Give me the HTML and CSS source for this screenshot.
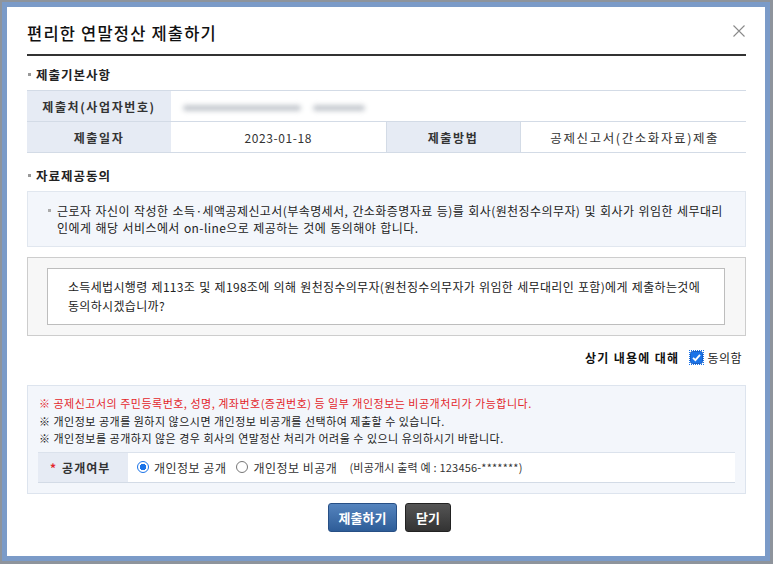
FILE: index.html
```html
<!DOCTYPE html>
<html>
<head>
  <meta charset="utf-8">
  <title>편리한 연말정산 제출하기</title>
  <link rel="stylesheet" href="styles.css">
</head>
<body>
  <div class="dialog">
    <div class="dialog-head">
      <h1>편리한 연말정산 제출하기</h1>
      <span class="close-btn">
        <svg viewBox="0 0 12 12" width="12" height="12">
          <path d="M0.5 0.5L11.5 11.5M11.5 0.5L0.5 11.5" stroke="#8a8a8a" stroke-width="1.1" fill="none"/>
        </svg>
      </span>
    </div>

    <h2 class="sec-title">제출기본사항</h2>
    <table class="info-table">
      <colgroup>
        <col class="c-label">
        <col class="c-date">
        <col class="c-label2">
        <col>
      </colgroup>
      <tr>
        <th>제출처(사업자번호)</th>
        <td colspan="3" class="blur-cell"><span class="blurred b1"></span><span class="blurred b2"></span></td>
      </tr>
      <tr>
        <th>제출일자</th>
        <td class="date-cell">2023-01-18</td>
        <th class="th-mid">제출방법</th>
        <td class="method-cell">공제신고서(간소화자료)제출</td>
      </tr>
    </table>

    <h2 class="sec-title sec-second">자료제공동의</h2>
    <div class="note-box">
      <p class="dot-item">근로자 자신이 작성한 소득·세액공제신고서(부속명세서, 간소화증명자료 등)를 회사(원천징수의무자) 및 회사가 위임한 세무대리인에게 해당 서비스에서 on-line으로 제공하는 것에 동의해야 합니다.</p>
    </div>

    <div class="agree-box">
      <div class="agree-inner">
        소득세법시행령 제113조 및 제198조에 의해 원천징수의무자(원천징수의무자가 위임한 세무대리인 포함)에게 제출하는것에 동의하시겠습니까?
      </div>
    </div>

    <div class="agree-check">
      <strong>상기 내용에 대해</strong>
      <span class="chk">
        <svg viewBox="0 0 13 13" width="13" height="13">
          <rect x="0.5" y="0.5" width="12" height="12" rx="2" fill="#1a73e8" stroke="#1a5fc4"/>
          <path d="M3 6.8L5.4 9.2L10 3.8" stroke="#fff" stroke-width="1.8" fill="none"/>
        </svg>
      </span>
      <span class="chk-text">동의함</span>
    </div>

    <div class="privacy-box">
      <p class="warn red">※ 공제신고서의 주민등록번호, 성명, 계좌번호(증권번호) 등 일부 개인정보는 비공개처리가 가능합니다.</p>
      <p class="warn">※ 개인정보 공개를 원하지 않으시면 개인정보 비공개를 선택하여 제출할 수 있습니다.</p>
      <p class="warn">※ 개인정보를 공개하지 않은 경우 회사의 연말정산 처리가 어려울 수 있으니 유의하시기 바랍니다.</p>
      <div class="open-row">
        <div class="open-label"><span class="req">*</span> 공개여부</div>
        <div class="open-value">
          <label class="radio"><span class="rad on"></span>개인정보 공개</label>
          <label class="radio"><span class="rad"></span>개인정보 비공개</label>
          <span class="example">(비공개시 출력 예 : 123456-*******)</span>
        </div>
      </div>
    </div>

    <div class="btns">
      <button class="btn btn-blue">제출하기</button>
      <button class="btn btn-dark">닫기</button>
    </div>
  </div>
</body>
</html>
```

FILE: styles.css
```css
body {
  margin: 0;
  padding: 0;
  background-color: #8e949c;
  font-family: "Noto Sans CJK KR", "Noto Sans", sans-serif;
  color: #222;
  font-size: 12px;
}

.dialog {
  margin: 2px 0 0 2px;
  width: 719px;
  height: 549px;
  border: 5px solid #7b9bc8;
  background-color: #fff;
  padding: 0 19px 0 20px;
}

.dialog-head {
  display: flex;
  justify-content: space-between;
  align-items: center;
  height: 47px;
  border-bottom: 2px solid #333;
}

.dialog-head h1 {
  margin: 4px 0 0 0;
  font-size: 16.5px;
  font-weight: 500;
  color: #111;
  letter-spacing: 1.2px;
}

.close-btn {
  display: flex;
  margin: 0 1px 0 0;
}

.sec-title {
  margin: 0;
  font-size: 12.5px;
  font-weight: bold;
  color: #222;
  display: flex;
  align-items: center;
  height: 34px;
  padding-top: 3px;
  box-sizing: border-box;
  letter-spacing: 1px;
}

.sec-title.sec-second {
  margin-top: 4px;
}

.sec-title::before {
  content: "";
  width: 3px;
  height: 3px;
  background-color: #999;
  margin: 0 5px 0 1px;
}

.info-table {
  width: 100%;
  border-collapse: collapse;
  border-top: 1px solid #d3dbe6;
  border-bottom: 1px solid #d3dbe6;
  table-layout: fixed;
}

.info-table col.c-label {
  width: 144px;
}

.info-table col.c-date {
  width: 215px;
}

.info-table col.c-label2 {
  width: 134px;
}

.info-table th,
.info-table td {
  height: 30px;
  padding: 0;
  border-bottom: 1px solid #d3dbe6;
  text-align: center;
  font-size: 12px;
  letter-spacing: 0.6px;
  color: #333;
}

.info-table th {
  background-color: #e6ebf4;
  font-weight: bold;
  letter-spacing: 1.6px;
}

.info-table th.th-mid {
  border-left: 1px solid #d3dbe6;
  border-right: 1px solid #d3dbe6;
}

.info-table td.method-cell {
  font-size: 12.5px;
  letter-spacing: 1.6px;
  padding-left: 3px;
}

.info-table td.blur-cell {
  text-align: left;
}

.blurred {
  display: inline-block;
  height: 6px;
  background-color: #c4c8ce;
  filter: blur(2.5px);
  border-radius: 3px;
  vertical-align: middle;
}

.blurred.b1 {
  width: 118px;
  margin-left: 12px;
}

.blurred.b2 {
  width: 52px;
  margin-left: 12px;
}

.note-box {
  background-color: #f3f6fb;
  border: 1px solid #e1e7ef;
  padding: 10px 14px 10px 20px;
}

.dot-item {
  margin: 0;
  position: relative;
  padding-left: 9px;
  line-height: 17px;
  font-size: 12px;
  color: #222;
  letter-spacing: 0.42px;
  word-spacing: 1px;
}

.dot-item::before {
  content: "";
  position: absolute;
  left: 0;
  top: 7px;
  width: 3px;
  height: 3px;
  background-color: #aaa;
}

.agree-box {
  margin-top: 10px;
  background-color: #f7f7f7;
  border: 1px solid #cdcdcd;
  padding: 10px 20px 10px 19px;
}

.agree-inner {
  background-color: #fff;
  border: 1px solid #bdbdbd;
  padding: 8px 20px 9px 20px;
  line-height: 19px;
  font-size: 12px;
  color: #222;
  letter-spacing: 0.32px;
  word-spacing: 1px;
}

.agree-check {
  display: flex;
  justify-content: flex-end;
  align-items: center;
  height: 42px;
  padding-right: 4px;
  font-size: 12px;
}

.agree-check strong {
  margin-right: 11px;
  color: #111;
  letter-spacing: 1.3px;
}

.chk {
  display: flex;
  margin-right: 4px;
  outline: 1px dotted #1a73e8;
}

.chk-text {
  letter-spacing: 0.5px;
}

.privacy-box {
  margin-top: 7px;
  background-color: #f3f6fb;
  border: 1px solid #dde4ee;
  padding: 9px 10px 10px 10px;
}

.warn {
  margin: 0 0 0 1px;
  font-size: 11px;
  line-height: 17.5px;
  color: #222;
  letter-spacing: 0.5px;
}

.warn.red {
  color: #e3262c;
}

.open-row {
  display: flex;
  margin-top: 4px;
  border-top: 1px solid #dbe2ec;
  border-bottom: 1px solid #d3dbe6;
  height: 29px;
}

.open-label {
  width: 90px;
  background-color: #e6ebf4;
  display: flex;
  align-items: center;
  padding-left: 12px;
  box-sizing: border-box;
  font-weight: bold;
  font-size: 12px;
  color: #333;
  letter-spacing: 1px;
}

.req {
  color: #e3262c;
  margin-right: 5px;
}

.open-value {
  flex: 1;
  background-color: #fff;
  display: flex;
  align-items: center;
  padding-left: 9px;
  font-size: 12px;
  color: #333;
  letter-spacing: 0.5px;
}

.radio {
  display: flex;
  align-items: center;
  margin-right: 10px;
}

.rad {
  width: 12px;
  height: 12px;
  border: 1px solid #777;
  border-radius: 50%;
  margin-right: 5px;
  box-sizing: border-box;
  background-color: #fff;
}

.rad.on {
  border: 1px solid #1a73e8;
  background: radial-gradient(circle, #1a73e8 0 3px, #fff 3.5px);
}

.example {
  margin-left: 2px;
  font-size: 11px;
  letter-spacing: 0.2px;
}

.btns {
  display: flex;
  justify-content: center;
  gap: 8px;
  margin-top: 9px;
  padding-left: 6px;
}

.btn {
  border: 1px solid #274f85;
  border-radius: 3px;
  color: #fff;
  font-family: "Noto Sans CJK KR", sans-serif;
  font-weight: bold;
  font-size: 13px;
  height: 29px;
  padding: 0;
  cursor: pointer;
}

.btn-blue {
  width: 69px;
  background: linear-gradient(#5584be, #2e5d98);
}

.btn-dark {
  width: 46px;
  border-color: #222;
  background: linear-gradient(#555, #333);
}
```
